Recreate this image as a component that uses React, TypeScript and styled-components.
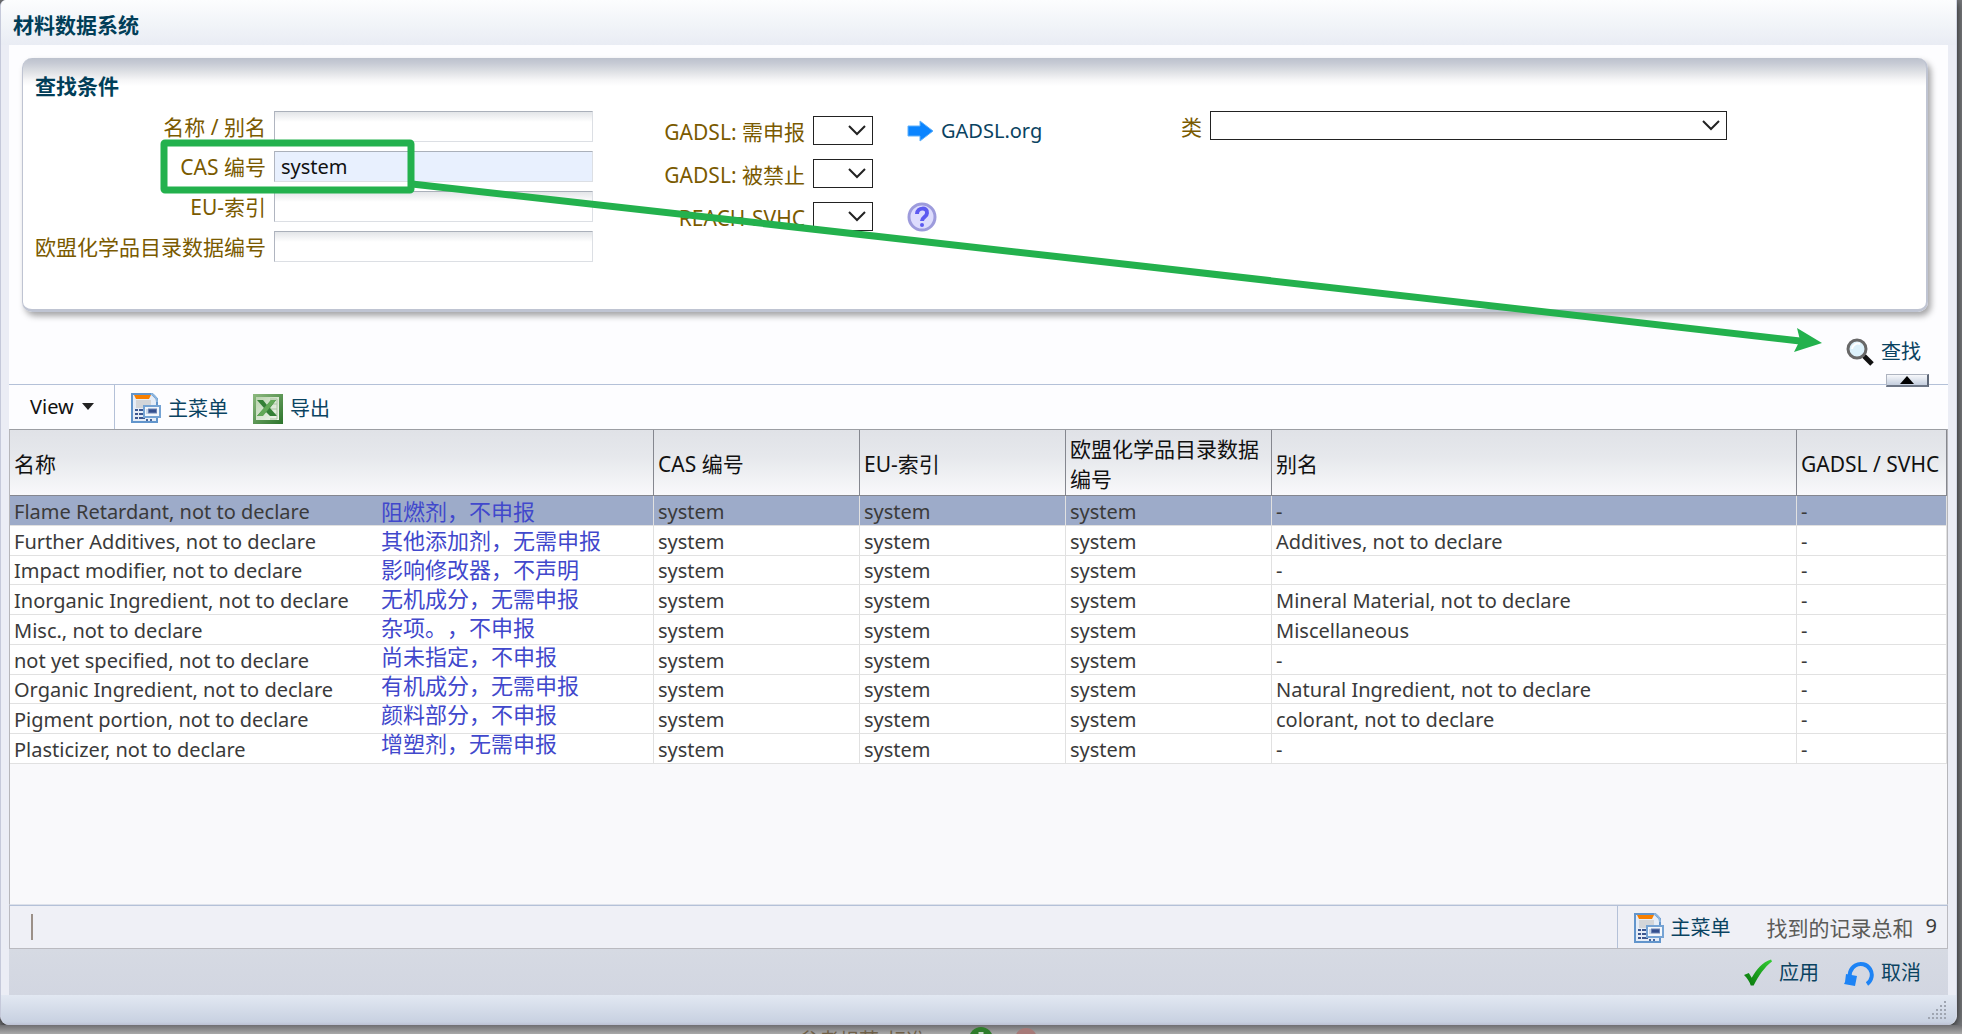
import React from "react";
import styled, { createGlobalStyle } from "styled-components";

const GlobalStyle = createGlobalStyle`
  *, *::before, *::after { box-sizing: border-box; }
  html, body { margin: 0; padding: 0; }
  body {
    font-family: "Noto Sans", "Noto Sans CJK SC", sans-serif;
    font-size: 20px;
    line-height: 28px;
    color: #3a3a3a;
    background: #a9a9a9;
    overflow: hidden;
  }
  button, input, select, textarea { font: inherit; color: inherit; }
`;

const Page = styled.div`
  position: relative;
  display: flex;
  flex-direction: column;
  height: 100vh;
  background: #77797c;
`;

const Dialog = styled.main`
  flex: 1;
  min-height: 0;
  display: flex;
  flex-direction: column;
  margin-right: 5px;
  border-left: 1px solid #c5c9da;
  border-right: 1px solid #d3d8e6;
  border-radius: 6px 0 9px 9px;
  background: #ebedf5;
  box-shadow: 0 2px 8px rgba(0, 0, 0, 0.75);
  overflow: hidden;
`;

const TitleBar = styled.header`
  height: 45px;
  padding: 11px 12px 0;
  background: linear-gradient(#fcfdfe, #f1f4f8 55%, #e9ecf4);
`;

const Title = styled.h1`
  margin: 0;
  font-size: 21px;
  line-height: 28px;
  font-weight: 700;
  color: #013e58;
`;

const Content = styled.div`
  flex: 1;
  min-height: 0;
  display: flex;
  flex-direction: column;
  margin: 0 8px;
  background: #fdfdff;
`;

const SearchPanel = styled.section`
  height: 254px;
  margin: 13px 20px 0 13px;
  padding: 15px 12px 0;
  border: 1px solid #bfc4d2;
  border-top: 0;
  border-right-width: 2px;
  border-bottom-width: 3px;
  border-radius: 10px;
  background: linear-gradient(#bcc1cd 0, #c6cad4 5px, #dfe1e5 14px, #f6f6f7 22px, #fff 28px);
  box-shadow: 3px 4px 6px rgba(0, 0, 0, 0.35);
`;

const PanelTitle = styled.h2`
  margin: 0 0 12px;
  font-size: 21px;
  line-height: 26px;
  font-weight: 700;
  color: #013e58;
`;

const Criteria = styled.form`
  display: grid;
  grid-template-columns: 558px 448px 1fr;
  align-items: start;
`;

const TextFields = styled.div`
  display: grid;
  grid-template-columns: 231px 319px;
  grid-auto-rows: 31px;
  column-gap: 8px;
  row-gap: 9px;
`;

const FlagFields = styled.div`
  display: grid;
  grid-template-columns: 212px 60px auto;
  grid-auto-rows: 29px;
  column-gap: 8px;
  row-gap: 14px;
  padding-top: 5px;
`;

const ClassField = styled.div`
  display: grid;
  grid-template-columns: 161px minmax(100px, 517px);
  grid-auto-rows: 29px;
  column-gap: 8px;
`;

const Label = styled.label`
  text-align: right;
  font-size: 21px;
  line-height: 32px;
  white-space: nowrap;
  color: #7a5a00;
`;

const TextInput = styled.input<{ $filled?: boolean }>`
  width: 100%;
  height: 31px;
  padding: 0 6px;
  border: 1px solid #dcdfe4;
  border-top-color: #aab0ba;
  border-left-color: #b0b5c0;
  border-radius: 0;
  outline: 0;
  color: #111;
  background: ${(p) => (p.$filled ? "#e8f0fe" : "linear-gradient(#e3e5e8, #fff 10px)")};
`;

const SelectBox = styled.div`
  display: grid;
  height: 29px;
`;

const Select = styled.select`
  grid-area: 1 / 1;
  width: 100%;
  height: 29px;
  border: 1px solid #222;
  border-radius: 0;
  background: #fff;
  appearance: none;
`;

const Chevron = styled.svg`
  grid-area: 1 / 1;
  justify-self: end;
  align-self: center;
  margin-right: 7px;
  pointer-events: none;
`;

const Extra = styled.div`
  display: flex;
  align-items: center;
  height: 29px;
  padding-left: 26px;
`;

const Link = styled.a`
  display: flex;
  align-items: center;
  gap: 7px;
  color: #0a4361;
  text-decoration: none;
`;

const IconButton = styled.button`
  display: flex;
  align-items: center;
  gap: 7px;
  padding: 0;
  border: 0;
  background: none;
  color: #0a4361;
  white-space: nowrap;
  cursor: pointer;
`;

const SearchRow = styled.div`
  display: flex;
  justify-content: flex-end;
  align-items: center;
  height: 30px;
  margin-top: 25px;
  padding-right: 27px;
`;

const CollapseRow = styled.div`
  display: flex;
  justify-content: flex-end;
  align-items: end;
  height: 18px;
  margin-bottom: -1px;
  padding-right: 19px;
  border-bottom: 1px solid #b4c1d8;
`;

const CollapseButton = styled.button`
  display: grid;
  place-items: center;
  width: 43px;
  height: 13px;
  margin-bottom: -3px;
  padding: 0;
  border: 1px solid #aeb4c0;
  border-right: 2px solid #5d6676;
  border-bottom: 2px solid #6d7686;
  background: linear-gradient(#f7f8fb, #c4cede);
`;

const Toolbar = styled.div`
  display: flex;
  align-items: stretch;
  height: 45px;
`;

const ViewMenu = styled.button`
  display: flex;
  align-items: center;
  gap: 8px;
  width: 106px;
  padding: 0 0 0 21px;
  border: 0;
  border-right: 1px solid #b4c1d8;
  background: none;
  color: #111;
`;

const Tools = styled.div`
  display: flex;
  align-items: center;
  gap: 25px;
  padding: 4px 0 0 16px;
`;

const TableArea = styled.div`
  position: relative;
  flex: 1;
  min-height: 0;
  border: 1px solid #b6b6ba;
  border-bottom-color: #dde1ea;
  border-top-color: #9c9ea3;
  background: #f9f9fb;
`;

const Table = styled.table`
  width: 100%;
  table-layout: fixed;
  border-collapse: separate;
  border-spacing: 0;
  background: #fff;
`;

const Col = styled.col<{ $w?: number }>`
  width: ${(p) => (p.$w ? `${p.$w}px` : "auto")};
`;

const Th = styled.th`
  height: 66px;
  padding: 2px 4px 0;
  border-right: 1px solid #85878f;
  border-bottom: 1px solid #85878f;
  text-align: left;
  font-size: 21px;
  font-weight: 400;
  line-height: 30px;
  color: #111;
`;

const HeadRow = styled.tr`
  background: linear-gradient(#e0e2e7, #e6e8ec 40%, #f9f9fb);
`;

const Row = styled.tr<{ $selected?: boolean }>`
  background: ${(p) => (p.$selected ? "#9dabc9" : "#fff")};
  &:nth-child(4n + 3) > td { height: 29px; }
`;

const Td = styled.td`
  height: 30px;
  padding: 2px 4px 0;
  border-right: 1px solid #e1e1e1;
  border-bottom: 1px solid #e1e1e1;
  line-height: 26px;
  white-space: nowrap;
`;

const Notes = styled.div`
  position: absolute;
  left: 371px;
  top: 67px;
  font-size: 22px;
  line-height: 29px;
  color: #4148cc;
  white-space: nowrap;
  text-spacing-trim: space-all;
`;

const StatusBar = styled.div`
  display: flex;
  align-items: stretch;
  height: 44px;
  border: 1px solid #babac0;
  border-top-color: #b4c1d8;
  background: #eff0f6;
`;

const StatusLeft = styled.div`
  flex: 1;
  display: flex;
  align-items: center;
  padding-left: 21px;
  border-right: 1px solid #b4c1d8;
`;

const Caret = styled.span`
  width: 2px;
  height: 26px;
  background: #9b9088;
`;

const StatusRight = styled.div`
  display: flex;
  align-items: center;
  padding: 2px 10px 0 16px;
`;

const Total = styled.span`
  margin-left: 36px;
  font-size: 21px;
  color: #5b5b58;
`;

const Count = styled.span`
  margin-left: 12px;
  padding-bottom: 4px;
`;

const ActionBar = styled.div`
  display: flex;
  justify-content: flex-end;
  align-items: center;
  gap: 25px;
  height: 46px;
  padding: 2px 27px 0 0;
  background: linear-gradient(#d6dae3, #d2d6e1);
`;

const DialogFoot = styled.footer`
  display: flex;
  justify-content: flex-end;
  align-items: flex-end;
  height: 30px;
  padding: 0 10px 6px;
  background: linear-gradient(#e2e8f2, #c8d1e1 90%, #bcc1d3);
`;

const Backdrop = styled.div`
  display: flex;
  gap: 43px;
  height: 9px;
  padding-left: 799px;
  overflow: hidden;
  color: #6f6048;
  background: linear-gradient(#6f6f72, #a9a9a9);
`;

const BackdropText = styled.span`
  line-height: 28px;
  padding-top: 2px;
`;

const Dots = styled.svg`
  flex: none;
`;

const Annotation = styled.svg`
  position: absolute;
  left: 0;
  top: 0;
  pointer-events: none;
`;

const MenuIcon = () => (
  <svg width="30" height="31" viewBox="0 0 30 31" aria-hidden="true">
    <path d="M1 1h20l5 5v23H1z" fill="#e6edf7" stroke="#6295cc" strokeWidth="2" />
    <path d="M20 1c3 0 6 4 6 8" fill="none" stroke="#8db6df" strokeWidth="2" />
    <path d="M3 2h17l-2 4H5z" fill="#f77f00" />
    <path d="M5 7h15v5h-7v3H5z" fill="#d3d5d8" />
    <path d="M4 17h3M8 17h4M4 21h3M8 21h4M4 25h3M8 25h6" stroke="#3c5790" strokeWidth="2" />
    <rect x="13" y="13" width="16" height="11" fill="#f4f7fb" stroke="#75a3d4" strokeWidth="2" />
    <path d="M16 16v5" stroke="#9db6d6" strokeWidth="1" />
    <path d="M17 18h9" stroke="#6b82b4" strokeWidth="5" />
    <path d="M18 18h7" stroke="#35508e" strokeWidth="3" />
    <path d="M15 27h2M19 27h2" stroke="#48669c" strokeWidth="2" />
  </svg>
);

const ExcelIcon = () => (
  <svg width="30" height="30" viewBox="0 0 30 30" aria-hidden="true">
    <defs>
      <linearGradient id="excelFrame" x1="0" y1="0" x2="1" y2="1">
        <stop offset="0" stopColor="#8eba80" />
        <stop offset="1" stopColor="#2c742c" />
      </linearGradient>
      <linearGradient id="excelSheet" x1="0" y1="0" x2="1" y2="1">
        <stop offset="0" stopColor="#b9d3ae" />
        <stop offset="1" stopColor="#f4f7f1" />
      </linearGradient>
    </defs>
    <rect width="30" height="30" fill="url(#excelFrame)" />
    <rect x="3" y="3" width="23" height="23" fill="url(#excelSheet)" />
    <path d="M17 5h7v20h-7" fill="none" stroke="#aac4a3" strokeWidth="1" />
    <path d="M17 10h7M17 15h7M17 20h7" stroke="#aac4a3" />
    <path d="M4 6h6l4 5 4-5h5l-6 8 7 8h-7l-4-4-4 4H4l7-8z" fill="#347f36" />
    <path d="M18 6h5L10 22H4z" fill="#62a857" />
  </svg>
);

const SearchIcon = () => (
  <svg width="28" height="28" viewBox="0 0 28 28" aria-hidden="true">
    <path d="M18 18l8 8" stroke="#111" strokeWidth="5" />
    <circle cx="11" cy="11" r="9" fill="#dcf1fb" stroke="#686868" strokeWidth="3" />
    <path d="M6 11a6 6 0 0 1 8-5" fill="none" stroke="#fff" strokeWidth="2" />
  </svg>
);

const CheckIcon = () => (
  <svg width="28" height="30" viewBox="0 0 29 30" aria-hidden="true">
    <defs>
      <linearGradient id="checkFill" x1="0" y1="1" x2="1" y2="0">
        <stop offset="0" stopColor="#06720a" />
        <stop offset="1" stopColor="#35cf35" />
      </linearGradient>
    </defs>
    <path d="M0 17l5-2 3 5C13 11 19 4 28 1l1 2C21 9 15 18 10 28H7C6 24 3 20 0 17z" fill="url(#checkFill)" />
  </svg>
);

const UndoIcon = () => (
  <svg width="30" height="28" viewBox="0 0 30 28" aria-hidden="true">
    <path d="M7 21A11 11 0 1 1 23 25" fill="none" stroke="#1d83f5" strokeWidth="4" />
    <path d="M0 25l1-2 1-8 11 2-2 10z" fill="#1d83f5" />
  </svg>
);

const ArrowIcon = () => (
  <svg width="27" height="22" viewBox="0 0 27 22" aria-hidden="true">
    <path d="M1 6h12V1l13 10-13 10v-5H1z" fill="#0a84ff" stroke="#5fb0fb" strokeWidth="1" />
  </svg>
);

const HelpIcon = () => (
  <svg width="30" height="30" viewBox="0 0 30 30" aria-hidden="true">
    <circle cx="15" cy="15" r="13" fill="#dddcfd" stroke="#9d9bdc" strokeWidth="3" />
    <path d="M10 12c0-7 11-7 10-1 0 4-5 4-5 8" fill="none" stroke="#5d5af0" strokeWidth="4" />
    <circle cx="15" cy="23" r="2" fill="#5d5af0" />
  </svg>
);

const Drop = ({ id }: { id: string }) => (
  <SelectBox>
    <Select id={id} defaultValue="">
      <option value="" />
    </Select>
    <Chevron width="18" height="11" viewBox="0 0 18 11" aria-hidden="true">
      <path d="M1 1l8 8 8-8" fill="none" stroke="#222" strokeWidth="2" />
    </Chevron>
  </SelectBox>
);

const textFields = [
  { id: "name", label: "名称 / 别名", value: "" },
  { id: "cas", label: "CAS 编号", value: "system" },
  { id: "eu", label: "EU-索引", value: "" },
  { id: "einecs", label: "欧盟化学品目录数据编号", value: "" },
];

const flagFields = [
  { id: "declarable", label: "GADSL: 需申报" },
  { id: "prohibited", label: "GADSL: 被禁止" },
  { id: "svhc", label: "REACH-SVHC" },
];

const rows = [
  ["Flame Retardant, not to declare", "-"],
  ["Further Additives, not to declare", "Additives, not to declare"],
  ["Impact modifier, not to declare", "-"],
  ["Inorganic Ingredient, not to declare", "Mineral Material, not to declare"],
  ["Misc., not to declare", "Miscellaneous"],
  ["not yet specified, not to declare", "-"],
  ["Organic Ingredient, not to declare", "Natural Ingredient, not to declare"],
  ["Pigment portion, not to declare", "colorant, not to declare"],
  ["Plasticizer, not to declare", "-"],
];

const notes = [
  "阻燃剂，不申报",
  "其他添加剂，无需申报",
  "影响修改器，不声明",
  "无机成分，无需申报",
  "杂项。，不申报",
  "尚未指定，不申报",
  "有机成分，无需申报",
  "颜料部分，不申报",
  "增塑剂，无需申报",
];

const gripDots = [0, 1, 2, 3, 4].flatMap((r) =>
  Array.from({ length: r + 1 }, (_, c) => ({ x: 16 - c * 4, y: r * 4 }))
);

export default function App() {
  return (
    <Page lang="zh-CN">
      <GlobalStyle />
      <Dialog>
        <TitleBar>
          <Title>材料数据系统</Title>
        </TitleBar>
        <Content>
          <SearchPanel>
            <PanelTitle>查找条件</PanelTitle>
            <Criteria onSubmit={(e) => e.preventDefault()}>
              <TextFields>
                {textFields.map((f) => (
                  <React.Fragment key={f.id}>
                    <Label htmlFor={f.id}>{f.label}</Label>
                    <TextInput id={f.id} defaultValue={f.value} $filled={f.value !== ""} />
                  </React.Fragment>
                ))}
              </TextFields>
              <FlagFields>
                {flagFields.map((f) => (
                  <React.Fragment key={f.id}>
                    <Label htmlFor={f.id}>{f.label}</Label>
                    <Drop id={f.id} />
                    <Extra>
                      {f.id === "declarable" && (
                        <Link href="#gadsl">
                          <ArrowIcon />
                          GADSL.org
                        </Link>
                      )}
                      {f.id === "svhc" && (
                        <IconButton type="button" aria-label="帮助">
                          <HelpIcon />
                        </IconButton>
                      )}
                    </Extra>
                  </React.Fragment>
                ))}
              </FlagFields>
              <ClassField>
                <Label htmlFor="class">类</Label>
                <Drop id="class" />
              </ClassField>
            </Criteria>
          </SearchPanel>
          <SearchRow>
            <IconButton type="button">
              <SearchIcon />
              查找
            </IconButton>
          </SearchRow>
          <CollapseRow>
            <CollapseButton type="button" aria-label="折叠">
              <svg width="14" height="8" viewBox="0 0 14 8" aria-hidden="true">
                <path d="M7 0l7 8H0z" fill="#000" />
              </svg>
            </CollapseButton>
          </CollapseRow>
          <Toolbar>
            <ViewMenu type="button">
              View
              <svg width="12" height="7" viewBox="0 0 12 7" aria-hidden="true">
                <path d="M0 0h12L6 7z" fill="#222" />
              </svg>
            </ViewMenu>
            <Tools>
              <IconButton type="button">
                <MenuIcon />
                主菜单
              </IconButton>
              <IconButton type="button">
                <ExcelIcon />
                导出
              </IconButton>
            </Tools>
          </Toolbar>
          <TableArea>
            <Table>
              <colgroup>
                <Col />
                <Col $w={206} />
                <Col $w={206} />
                <Col $w={206} />
                <Col $w={525} />
                <Col $w={150} />
              </colgroup>
              <thead>
                <HeadRow>
                  <Th scope="col">名称</Th>
                  <Th scope="col">CAS 编号</Th>
                  <Th scope="col">EU-索引</Th>
                  <Th scope="col">欧盟化学品目录数据编号</Th>
                  <Th scope="col">别名</Th>
                  <Th scope="col">GADSL / SVHC</Th>
                </HeadRow>
              </thead>
              <tbody>
                {rows.map(([name, alias], i) => (
                  <Row key={name} $selected={i === 0}>
                    <Td>{name}</Td>
                    <Td>system</Td>
                    <Td>system</Td>
                    <Td>system</Td>
                    <Td>{alias}</Td>
                    <Td>-</Td>
                  </Row>
                ))}
              </tbody>
            </Table>
            <Notes>
              {notes.map((n) => (
                <div key={n}>{n}</div>
              ))}
            </Notes>
          </TableArea>
          <StatusBar>
            <StatusLeft>
              <Caret />
            </StatusLeft>
            <StatusRight>
              <IconButton type="button">
                <MenuIcon />
                主菜单
              </IconButton>
              <Total>找到的记录总和</Total>
              <Count>9</Count>
            </StatusRight>
          </StatusBar>
          <ActionBar>
            <IconButton type="button">
              <CheckIcon />
              应用
            </IconButton>
            <IconButton type="button">
              <UndoIcon />
              取消
            </IconButton>
          </ActionBar>
        </Content>
        <DialogFoot>
          <Dots width="18" height="18" viewBox="0 0 18 18" aria-hidden="true">
            {gripDots.map((d) => (
              <rect key={`${d.x}-${d.y}`} x={d.x} y={d.y} width="2" height="2" fill="#9fa5b1" />
            ))}
          </Dots>
        </DialogFoot>
      </Dialog>
      <Backdrop aria-hidden="true">
        <BackdropText>参考规范/标准</BackdropText>
        <Dots width="70" height="24" viewBox="0 0 70 24">
          <circle cx="12" cy="14" r="12" fill="#2f7d2b" />
          <path d="M12 7v14" stroke="#c9d8c9" strokeWidth="5" />
          <circle cx="57" cy="14" r="11" fill="#a77a78" />
        </Dots>
      </Backdrop>
      <Annotation width="1962" height="400" viewBox="0 0 1962 400" aria-hidden="true">
        <rect x="164" y="143" width="247" height="47" rx="1" fill="none" stroke="#23b14d" strokeWidth="7" />
        <path d="M412 184L1150 267 1800 341" fill="none" stroke="#23b14d" strokeWidth="7" />
        <path d="M1797 328l25 15-28 9 6-12z" fill="#23b14d" />
      </Annotation>
    </Page>
  );
}
